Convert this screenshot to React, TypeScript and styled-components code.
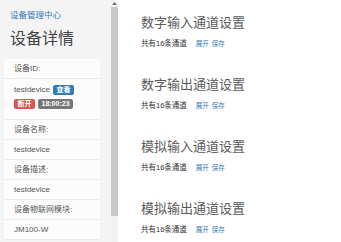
import styled, { createGlobalStyle } from "styled-components";

const GlobalStyle = createGlobalStyle`
	html, body {
		margin: 0;
		padding: 0;
		background: #fff;
	}
	body {
		font-family: "Liberation Sans", "Noto Sans CJK SC", sans-serif;
		color: #333;
	}
`

const Page = styled.div`
	width: 341px;
	height: 242px;
	display: flex;
	overflow: hidden;
`

const Sidebar = styled.div`
	width: 111px;
	flex-shrink: 0;
	background: #f4f4f4;
	padding: 10px 11px 0 4px;
	box-sizing: border-box;
	display: flex;
	flex-direction: column;
`

const Crumb = styled.a`
	display: block;
	padding-left: 6px;
	font-size: 8.5px;
	line-height: 10px;
	color: #337ab7;
	text-decoration: none;
`

const Title = styled.h1`
	margin: 9px 0 10px;
	padding-left: 6px;
	font-size: 16px;
	line-height: 20px;
	font-weight: 400;
	color: #444;
`

const List = styled.div`
	display: flex;
	flex-direction: column;
`

const Item = styled.div<{ $tall?: boolean }>`
	background: #fcfcfc;
	border-bottom: 1px solid #ebebeb;
	padding: ${p => p.$tall ? "5px 10px 10px" : "5px 10px 4px"};
	font-size: 8px;
	line-height: 10px;
	color: #555;
	display: flex;
	flex-direction: column;
	gap: 3px;
`

const Line = styled.div`
	display: flex;
	align-items: center;
	gap: 3px;
	height: 11px;
`

const Badge = styled.span<{ $color: string }>`
	display: inline-block;
	background: ${p => p.$color};
	color: #fff;
	font-size: 7px;
	font-weight: 700;
	line-height: 10px;
	padding: 0 3.5px;
	border-radius: 2px;
`

const Scrollbar = styled.div`
	width: 7px;
	flex-shrink: 0;
	display: flex;
	flex-direction: column;
	background: #f1f1f1;
`

const ArrowBox = styled.div`
	height: 7px;
	display: flex;
	align-items: center;
	justify-content: center;
	background: #f1f1f1;
`

const Thumb = styled.div`
	height: 209px;
	background: #c8c8c8;
`

const Main = styled.div`
	flex: 1;
	background: #fff;
	padding: 15px 0 0 23px;
	display: flex;
	flex-direction: column;
`

const Section = styled.div`
	margin-bottom: 28px;
`

const SectionTitle = styled.h2`
	margin: 0 0 9px;
	font-size: 13px;
	line-height: 15px;
	font-weight: 400;
	color: #5a5a5a;
`

const Meta = styled.div`
	display: flex;
	align-items: center;
	font-size: 7.5px;
	line-height: 10px;
	color: #333;
`

const Links = styled.span`
	margin-left: 9px;
	display: flex;
	gap: 3px;
`

const Link = styled.a`
	font-size: 6.5px;
	color: #337ab7;
	text-decoration: none;
`

const sections = ["数字输入通道设置", "数字输出通道设置", "模拟输入通道设置", "模拟输出通道设置"];

const App = () => {
	return (
		<Page>
			<GlobalStyle />
			<Sidebar>
				<Crumb href="#">设备管理中心</Crumb>
				<Title>设备详情</Title>
				<List>
					<Item>设备ID:</Item>
					<Item $tall>
						<Line>testdevice <Badge $color="#337ab7">查看</Badge></Line>
						<Line>
							<Badge $color="#d9534f">断开</Badge>
							<Badge $color="#777">18:00:23</Badge>
						</Line>
					</Item>
					<Item>设备名称:</Item>
					<Item>testdevice</Item>
					<Item>设备描述:</Item>
					<Item>testdevice</Item>
					<Item>设备物联网模块:</Item>
					<Item>JM100-W</Item>
				</List>
			</Sidebar>
			<Scrollbar>
				<ArrowBox>
					<svg width="5" height="3" viewBox="0 0 5 3">
						<path d="M0 3 L2.5 0 L5 3 Z" fill="#777" />
					</svg>
				</ArrowBox>
				<Thumb />
			</Scrollbar>
			<Main>
				{sections.map(s => (
					<Section key={s}>
						<SectionTitle>{s}</SectionTitle>
						<Meta>
							共有16条通道
							<Links>
								<Link href="#">展开</Link>
								<Link href="#">保存</Link>
							</Links>
						</Meta>
					</Section>
				))}
			</Main>
		</Page>
	);
}

export default App;
